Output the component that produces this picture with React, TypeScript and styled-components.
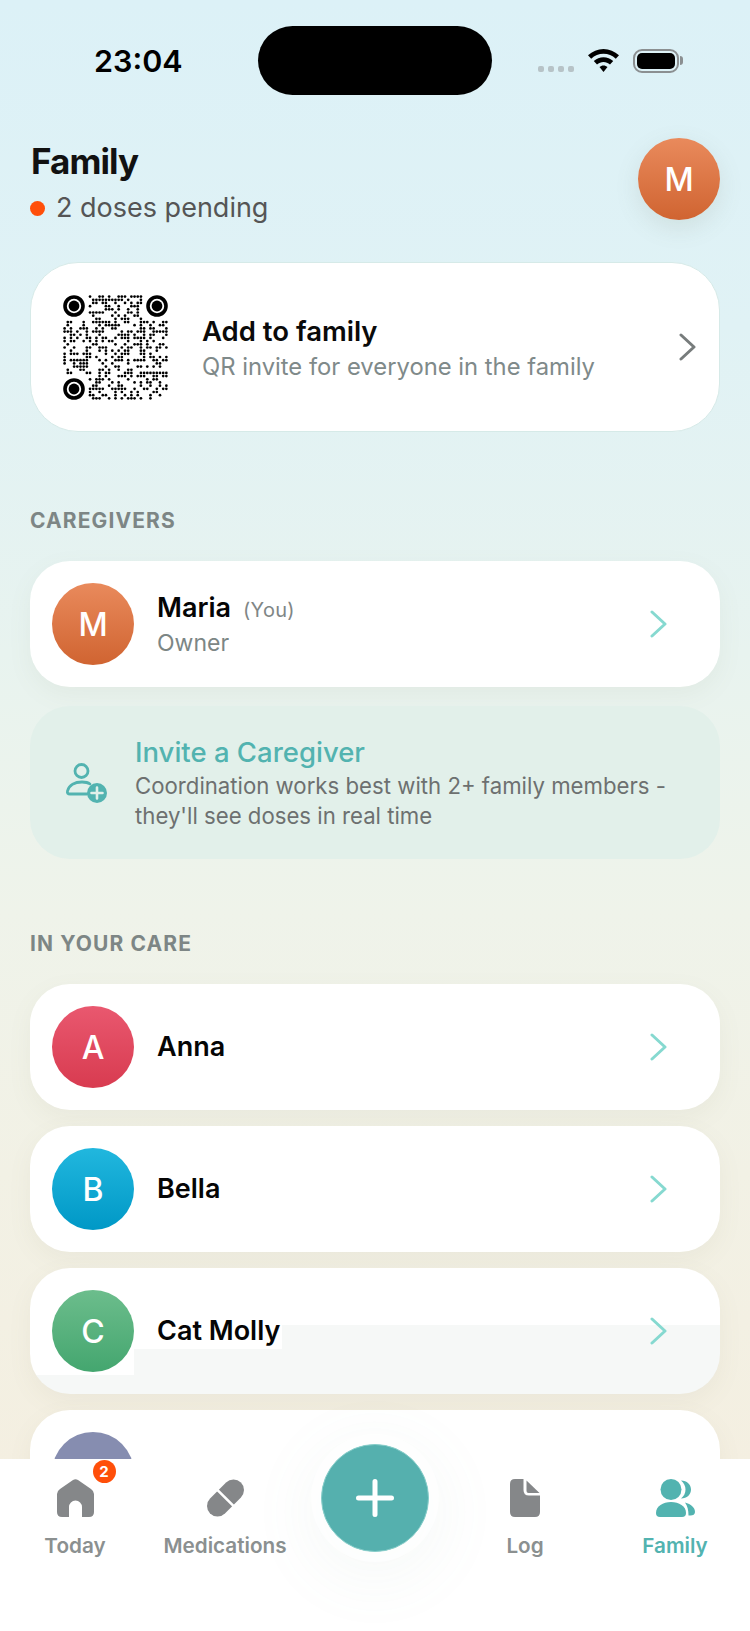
import styled, { createGlobalStyle } from "styled-components";

const GlobalStyle = createGlobalStyle`
  html, body {
    margin: 0;
    padding: 0;
  }
  body {
    font-family: Inter, "Noto Sans", "Liberation Sans", sans-serif;
    -webkit-font-smoothing: antialiased;
  }
  * {
    box-sizing: border-box;
  }
`;

const Screen = styled.div`
  position: relative;
  width: 750px;
  height: 1631px;
  overflow: hidden;
  background: linear-gradient(180deg, #dcf1f7 0%, #e0f2f5 20%, #e8f3ef 40%, #eff3ea 56%, #f2f1e5 72%, #f4efe1 90%);
`;

const StatusBar = styled.div`
  display: grid;
  grid-template-columns: 258px 234px 1fr;
  align-items: start;
  height: 95px;
  padding-top: 26px;
`;

const Time = styled.div`
  padding: 17px 0 0 94px;
  font-size: 30.5px;
  line-height: 36px;
  font-weight: 600;
  color: #000;
`;

const Island = styled.div`
  height: 69px;
  border-radius: 35px;
  background: #000;
`;

const StatusIcons = styled.div`
  display: flex;
  align-items: flex-start;
  padding: 23px 0 0 46px;
`;

const SignalDots = styled.div`
  display: flex;
  gap: 4px;
  margin: 17px 14px 0 0;
  i {
    display: block;
    width: 6px;
    height: 6px;
    border-radius: 2px;
    background: #b7c3c7;
  }
`;

const Battery = styled.div`
  position: relative;
  width: 46px;
  height: 24px;
  margin-left: 14px;
  border: 2px solid #8b8f91;
  border-radius: 9px;
  padding: 2px;
  &::before {
    content: "";
    display: block;
    height: 100%;
    border-radius: 5px;
    background: #000;
  }
  &::after {
    content: "";
    position: absolute;
    right: -6px;
    top: 5px;
    width: 3px;
    height: 9px;
    border-radius: 0 3px 3px 0;
    background: #8b8f91;
  }
`;

const Content = styled.main`
  padding: 0 30px;
`;

const Header = styled.header`
  display: flex;
  justify-content: space-between;
  align-items: flex-start;
  margin-top: 43px;
`;

const Title = styled.h1`
  margin: 2px 0 0 1px;
  font-size: 35px;
  line-height: 42px;
  font-weight: 700;
  letter-spacing: -0.9px;
  color: #111;
`;

const Pending = styled.div`
  display: flex;
  align-items: center;
  gap: 11px;
  margin-top: 8px;
  font-size: 27px;
  line-height: 36px;
  color: #555;
`;

const PendingDot = styled.span`
  width: 15px;
  height: 15px;
  border-radius: 50%;
  background: #ff4f0a;
`;

const Avatar = styled.div<{ $from: string; $to: string }>`
  flex: none;
  display: flex;
  align-items: center;
  justify-content: center;
  width: 82px;
  height: 82px;
  border-radius: 50%;
  background: linear-gradient(180deg, ${(p) => p.$from}, ${(p) => p.$to});
  color: #fff;
  font-size: 32px;
  font-weight: 500;
`;

const ProfileAvatar = styled(Avatar)`
  box-shadow: 0 8px 24px rgba(110, 120, 100, 0.14);
`;

const QrCard = styled.section`
  display: flex;
  align-items: center;
  height: 170px;
  margin-top: 36px;
  padding: 0 23px 0 32px;
  background: #fff;
  border: 1px solid #d6eae8;
  border-radius: 48px;
`;

const QrText = styled.div`
  flex: 1;
  margin: 1px 0 0 34px;
`;

const QrTitle = styled.div`
  margin-bottom: 2px;
  font-size: 27.5px;
  line-height: 36px;
  font-weight: 600;
  color: #0a0a0a;
`;

const QrSub = styled.div`
  font-size: 23.8px;
  line-height: 32px;
  color: #7f8a8a;
`;

const SectionLabel = styled.h2<{ $top: number }>`
  margin: ${(p) => p.$top}px 0 27px;
  font-size: 21px;
  line-height: 26px;
  font-weight: 700;
  letter-spacing: 1.1px;
  color: #7d8685;
`;

const PersonList = styled.div`
  display: flex;
  flex-direction: column;
  gap: 16px;
`;

const PersonCard = styled.div<{ $streaked?: boolean }>`
  display: flex;
  align-items: center;
  height: 126px;
  padding: 0 53px 0 22px;
  border-radius: 40px;
  background-color: #fff;
  box-shadow: 0 8px 24px rgba(125, 125, 95, 0.07);
  ${(p) =>
    p.$streaked &&
    `
    background-image:
      linear-gradient(#f6f8f7, #f6f8f7),
      linear-gradient(#f6f8f7, #f6f8f7),
      linear-gradient(#f6f8f7, #f6f8f7);
    background-repeat: no-repeat;
    background-position: right bottom;
    background-size: 438px 69px, 586px 45px, 100% 19px;
  `}
`;

const PersonText = styled.div`
  flex: 1;
  margin-left: 23px;
`;

const NameRow = styled.div`
  display: flex;
  align-items: baseline;
  gap: 12px;
`;

const Name = styled.div`
  font-size: 27px;
  line-height: 36px;
  font-weight: 600;
  color: #050505;
`;

const You = styled.span`
  font-size: 20px;
  color: #7f8686;
  letter-spacing: 0.3px;
`;

const Role = styled.div`
  margin-top: 1px;
  font-size: 23px;
  line-height: 32px;
  color: #7c8685;
`;

const InviteCard = styled.div`
  display: flex;
  align-items: center;
  height: 153px;
  margin-top: 19px;
  padding: 0 30px 0 35px;
  border-radius: 40px;
  background: #e2f0ea;
`;

const InviteText = styled.div`
  margin-left: 28px;
`;

const InviteTitle = styled.div`
  margin-bottom: 2px;
  font-size: 27.5px;
  line-height: 34px;
  font-weight: 500;
  color: #52b3b0;
`;

const InviteSub = styled.div`
  font-size: 22.2px;
  line-height: 30px;
  color: #6d7070;
`;

const TabBar = styled.nav`
  position: absolute;
  left: 0;
  right: 0;
  bottom: 0;
  height: 172px;
  display: grid;
  grid-template-columns: repeat(5, 150px);
  background: #fff;
`;

const Tab = styled.div<{ $active?: boolean }>`
  display: flex;
  flex-direction: column;
  align-items: center;
  padding-top: 20px;
  font-size: 20.7px;
  line-height: 28px;
  font-weight: 600;
  color: ${(p) => (p.$active ? "#52b3b0" : "#8b9090")};
`;

const TabIcon = styled.div`
  position: relative;
  display: flex;
  justify-content: center;
  height: 38px;
  margin-bottom: 15px;
`;

const Badge = styled.span`
  position: absolute;
  left: 36px;
  top: -19px;
  width: 23px;
  height: 23px;
  border-radius: 50%;
  background: #ff4f0a;
  color: #fff;
  font-size: 15px;
  line-height: 23px;
  font-weight: 700;
  text-align: center;
`;

const FabSlot = styled.div`
  position: relative;
`;

const Fab = styled.button`
  position: absolute;
  left: 21px;
  top: -15px;
  display: flex;
  align-items: center;
  justify-content: center;
  width: 108px;
  height: 108px;
  padding: 0;
  border: 1px solid #86cdc9;
  border-radius: 50%;
  background: #55b0ae;
  box-shadow:
    0 0 0 10px rgba(255, 255, 255, 0.62),
    0 14px 60px 20px rgba(110, 150, 140, 0.05);
`;

function Chevron({ color }: { color: string }) {
  return (
    <svg width="17" height="28" viewBox="0 0 17 28" fill="none">
      <path d="M2 2L15 14L2 26" stroke={color} strokeWidth="3" strokeLinecap="round" strokeLinejoin="round" />
    </svg>
  );
}

function buildQrModules() {
  const size = 33;
  const cells: [number, number][] = [];
  let seed = 48271;
  for (let y = 0; y < size; y++) {
    for (let x = 0; x < size; x++) {
      seed = (seed * 16807) % 2147483647;
      const inFinder = (x < 8 && y < 8) || (x > 24 && y < 8) || (x < 8 && y > 24);
      if (!inFinder && seed % 100 < 46) cells.push([x, y]);
    }
  }
  return cells;
}

const qrModules = buildQrModules();

function QrCode() {
  const finders = [
    [11, 11],
    [94, 11],
    [11, 94],
  ];
  return (
    <svg width="105" height="105" viewBox="0 0 105 105" style={{ flex: "none" }}>
      {qrModules.map(([x, y]) => (
        <circle key={`${x}-${y}`} cx={x * 3.18 + 1.6} cy={y * 3.18 + 1.6} r="1.35" fill="#000" />
      ))}
      {finders.map(([cx, cy]) => (
        <g key={`${cx}-${cy}`}>
          <circle cx={cx} cy={cy} r="9" fill="none" stroke="#000" strokeWidth="3.6" />
          <circle cx={cx} cy={cy} r="5.4" fill="#000" />
        </g>
      ))}
    </svg>
  );
}

function InviteIcon() {
  return (
    <svg width="42" height="42" viewBox="0 0 42 42" fill="none" style={{ flex: "none" }}>
      <circle cx="16.5" cy="9" r="6.5" stroke="#52b3b0" strokeWidth="2.8" />
      <path
        d="M22 32H5Q1.8 32 2.5 29C4 23 10 20 17 20C20 20 23 20.5 25 22"
        stroke="#52b3b0"
        strokeWidth="2.8"
        strokeLinecap="round"
      />
      <circle cx="32" cy="31" r="10" fill="#52b3b0" />
      <path d="M32 25.5V36.5M26.5 31H37.5" stroke="#e2f0ea" strokeWidth="2.6" strokeLinecap="round" />
    </svg>
  );
}

function HomeIcon() {
  return (
    <svg width="37" height="38" viewBox="0 0 37 38" fill="#858789">
      <path d="M16 1Q18.5 -0.5 21 1L34 10Q37 12 37 15V33Q37 38 32 38H25V28A6.5 6.5 0 0 0 12 28V38H5Q0 38 0 33V15Q0 12 3 10Z" />
    </svg>
  );
}

function PillIcon() {
  return (
    <svg width="37" height="38" viewBox="0 0 37 38">
      <g transform="rotate(-45 18.5 19)">
        <rect x="-3.3" y="8.5" width="43.6" height="21" rx="10.5" fill="#858789" />
        <rect x="17.2" y="6" width="2.6" height="26" fill="#fff" />
      </g>
    </svg>
  );
}

function DocIcon() {
  return (
    <svg width="30" height="38" viewBox="0 0 30 38" fill="#858789">
      <path d="M5 0H13.5V11Q13.5 16.5 19 16.5H30V33Q30 38 25 38H5Q0 38 0 33V5Q0 0 5 0Z" />
      <path d="M16.5 1.5L29.5 14H18.5Q16.5 14 16.5 12Z" />
    </svg>
  );
}

function FamilyIcon() {
  return (
    <svg width="39" height="38" viewBox="0 0 39 38" fill="#52b3b0">
      <circle cx="15" cy="10.5" r="10.5" />
      <path d="M4 38Q0 38 0 34C0 27 7 23 15 23C23 23 30 27 30 34Q30 38 26 38Z" />
      <path d="M25 1.5C31 1.5 35 5.5 35 10.5C35 15.5 31 19.5 25 19.5C28 17 29.5 14 29.5 10.5C29.5 7 28 4 25 1.5Z" />
      <path d="M29 23.5C35 25 39 28.5 39 33C39 35.5 37 36.5 34.5 36.5H32.5C32.5 31 31.5 27 29 23.5Z" />
    </svg>
  );
}

function WifiIcon() {
  return (
    <svg width="31" height="23" viewBox="0 0 31 23" fill="#000">
      <path d="M15.5 0C21.3 0 26.7 2.3 31 6.3L27.8 9.7C24.4 6.6 20.1 4.8 15.5 4.8C10.9 4.8 6.6 6.6 3.2 9.7L0 6.3C4.3 2.3 9.7 0 15.5 0Z" />
      <path d="M15.5 8.2C19.1 8.2 22.5 9.6 25.2 12L22 15.4C20.2 13.8 17.9 12.9 15.5 12.9C13.1 12.9 10.8 13.8 9 15.4L5.8 12C8.5 9.6 11.9 8.2 15.5 8.2Z" />
      <path d="M15.5 16.4C17 16.4 18.4 17 19.5 18L15.5 23L11.5 18C12.6 17 14 16.4 15.5 16.4Z" />
    </svg>
  );
}

const orange = { $from: "#e98a5c", $to: "#d06431" };

// the fourth entry sits mostly under the tab bar, only its avatar top shows
const careList = [
  { name: "Anna", letter: "A", $from: "#e9586f", $to: "#d83b50" },
  { name: "Bella", letter: "B", $from: "#21b7de", $to: "#0098c6" },
  { name: "Cat Molly", letter: "C", $from: "#6cbd8c", $to: "#44a66f", streaked: true },
  { name: "", letter: "", $from: "#868db0", $to: "#868db0" },
];

export default function App() {
  return (
    <>
      <GlobalStyle />
      <Screen>
        <StatusBar>
          <Time>23:04</Time>
          <Island />
          <StatusIcons>
            <SignalDots>
              <i />
              <i />
              <i />
              <i />
            </SignalDots>
            <WifiIcon />
            <Battery />
          </StatusIcons>
        </StatusBar>

        <Content>
          <Header>
            <div>
              <Title>Family</Title>
              <Pending>
                <PendingDot />2 doses pending
              </Pending>
            </div>
            <ProfileAvatar {...orange}>M</ProfileAvatar>
          </Header>

          <QrCard>
            <QrCode />
            <QrText>
              <QrTitle>Add to family</QrTitle>
              <QrSub>QR invite for everyone in the family</QrSub>
            </QrText>
            <Chevron color="#777c7c" />
          </QrCard>

          <SectionLabel $top={76}>CAREGIVERS</SectionLabel>
          <PersonCard>
            <Avatar {...orange}>M</Avatar>
            <PersonText>
              <NameRow>
                <Name>Maria</Name>
                <You>(You)</You>
              </NameRow>
              <Role>Owner</Role>
            </PersonText>
            <Chevron color="#86d9d0" />
          </PersonCard>

          <InviteCard>
            <InviteIcon />
            <InviteText>
              <InviteTitle>Invite a Caregiver</InviteTitle>
              <InviteSub>
                Coordination works best with 2+ family members -<br />
                they'll see doses in real time
              </InviteSub>
            </InviteText>
          </InviteCard>

          <SectionLabel $top={72}>IN YOUR CARE</SectionLabel>
          <PersonList>
            {careList.map((person) => (
              <PersonCard key={person.$from} $streaked={person.streaked}>
                <Avatar $from={person.$from} $to={person.$to}>
                  {person.letter}
                </Avatar>
                <PersonText>
                  <Name>{person.name}</Name>
                </PersonText>
                <Chevron color="#86d9d0" />
              </PersonCard>
            ))}
          </PersonList>
        </Content>

        <TabBar>
          <Tab>
            <TabIcon>
              <HomeIcon />
              <Badge>2</Badge>
            </TabIcon>
            Today
          </Tab>
          <Tab>
            <TabIcon>
              <PillIcon />
            </TabIcon>
            Medications
          </Tab>
          <FabSlot>
            <Fab aria-label="Add">
              <svg width="38" height="38" viewBox="0 0 38 38" fill="none">
                <path d="M19 2.5V35.5M2.5 19H35.5" stroke="#fff" strokeWidth="5" strokeLinecap="round" />
              </svg>
            </Fab>
          </FabSlot>
          <Tab>
            <TabIcon>
              <DocIcon />
            </TabIcon>
            Log
          </Tab>
          <Tab $active>
            <TabIcon>
              <FamilyIcon />
            </TabIcon>
            Family
          </Tab>
        </TabBar>
      </Screen>
    </>
  );
}
